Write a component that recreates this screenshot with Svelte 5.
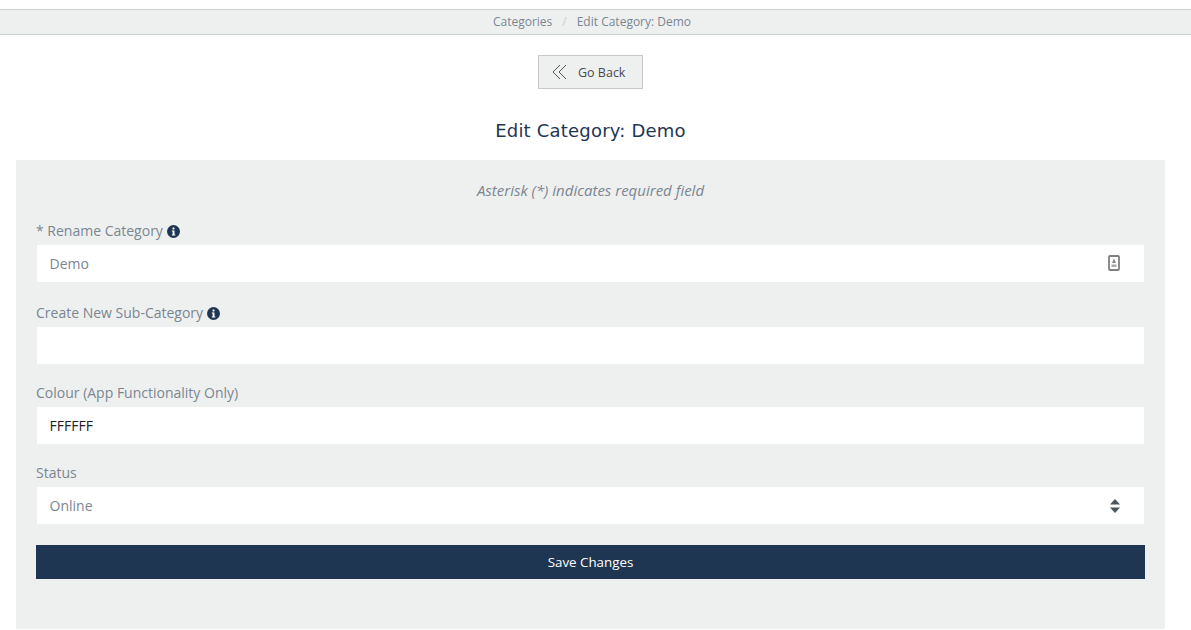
<script>
	let category = 'Demo';
	let colour = 'FFFFFF';
	let status = 'Online';
</script>

<div class="page">
	<nav class="crumbs">
		<span>Categories</span>
		<span class="sep">/</span>
		<span>Edit Category: Demo</span>
	</nav>

	<div class="content">
		<div class="back-row">
			<button class="back">
				<svg width="16" height="16" viewBox="0 0 16 16" fill="none" stroke="#555" stroke-width="1">
					<path d="M8 1 L1 8 L8 15" />
					<path d="M14 1 L7 8 L14 15" />
				</svg>
				Go Back
			</button>
		</div>

		<h1>Edit Category: Demo</h1>

		<form class="panel" on:submit|preventDefault>
			<p class="note">Asterisk (*) indicates required field</p>

			<label class="first" for="name">
				* Rename Category
				<svg class="info" width="13" height="13" viewBox="0 0 13 13">
					<circle cx="6.5" cy="6.5" r="6.5" fill="#1f3653" />
					<rect x="5.5" y="2.4" width="2" height="2" rx="0.6" fill="#fff" />
					<path d="M4.8 5.4 H7.5 V9.4 H8.3 V10.6 H4.8 V9.4 H5.6 V6.6 H4.8 Z" fill="#fff" />
				</svg>
			</label>
			<div class="field">
				<input id="name" bind:value={category} />
				<svg class="contact" width="12" height="16" viewBox="0 0 12 16" fill="none">
					<rect x="1" y="1" width="10" height="14" rx="1" stroke="#808080" stroke-width="1.8" />
					<path d="M6 3.5 L8 8 H4 Z" fill="#888" />
					<rect x="3.5" y="9.5" width="5" height="2.5" fill="#aaa" />
				</svg>
			</div>

			<label for="sub">
				Create New Sub-Category
				<svg class="info" width="13" height="13" viewBox="0 0 13 13">
					<circle cx="6.5" cy="6.5" r="6.5" fill="#1f3653" />
					<rect x="5.5" y="2.4" width="2" height="2" rx="0.6" fill="#fff" />
					<path d="M4.8 5.4 H7.5 V9.4 H8.3 V10.6 H4.8 V9.4 H5.6 V6.6 H4.8 Z" fill="#fff" />
				</svg>
			</label>
			<div class="field"><input id="sub" /></div>

			<label class="tight" for="colour">Colour (App Functionality Only)</label>
			<div class="field"><input id="colour" class="dark" bind:value={colour} /></div>

			<label class="tight" for="status">Status</label>
			<div class="field">
				<select id="status" bind:value={status}>
					<option>Online</option>
					<option>Offline</option>
				</select>
				<svg class="updown" width="10" height="14" viewBox="0 0 10 14" fill="#4a5562">
					<path d="M5 0 L10 5.5 H0 Z" />
					<path d="M0 8.5 H10 L5 14 Z" />
				</svg>
			</div>

			<button class="save" type="submit">Save Changes</button>
		</form>
	</div>
</div>

<style>
	:global(body) {
		margin: 0;
		background: #fff;
	}

	.page {
		padding-top: 9px;
		font-family: "Open Sans", "Liberation Sans", sans-serif;
		color: #7b8691;
	}

	.crumbs {
		display: flex;
		justify-content: center;
		align-items: center;
		gap: 10px;
		height: 24px;
		padding-right: 7px;
		background: #eef0f0;
		border-top: 1px solid #c9ced3;
		border-bottom: 1px solid #c9ced3;
		font-size: 12px;
		line-height: 22px;
	}

	.sep {
		color: #c9ced3;
	}

	.content {
		width: 1149px;
		margin-left: 16px;
	}

	.back-row {
		display: flex;
		justify-content: center;
		padding-top: 20px;
	}

	.back {
		display: flex;
		align-items: center;
		gap: 10px;
		box-sizing: border-box;
		width: 105px;
		height: 34px;
		padding: 0 0 0 13px;
		background: #eef0f0;
		border: 1px solid #c8c8c8;
		font-family: inherit;
		font-size: 12.5px;
		color: #4a4a4a;
	}

	h1 {
		margin: 0;
		padding-top: 30px;
		height: 24px;
		line-height: 24px;
		padding-bottom: 17px;
		text-align: center;
		font-family: "DejaVu Sans", sans-serif;
		font-size: 18px;
		font-weight: 400;
		letter-spacing: 0.2px;
		color: #1f3653;
	}

	.panel {
		box-sizing: border-box;
		display: flex;
		flex-direction: column;
		height: 469px;
		padding: 20px 21px 0 21px;
		background: #eef0f0;
	}

	.note {
		margin: 0;
		height: 20px;
		line-height: 20px;
		text-align: center;
		font-size: 15px;
		font-style: italic;
		color: #7b8691;
	}

	label {
		display: flex;
		align-items: center;
		gap: 4px;
		height: 20px;
		margin-top: 21px;
		margin-bottom: 4px;
		margin-left: -1px;
		font-size: 14px;
		line-height: 20px;
		color: #7b8691;
	}

	label.tight {
		margin-top: 19px;
	}

	.field {
		position: relative;
		width: 1107px;
		height: 37px;
	}

	input,
	select {
		box-sizing: border-box;
		display: block;
		width: 100%;
		height: 37px;
		padding: 0 13px 1px 12.5px;
		background: #fff;
		border: 0;
		border-radius: 0;
		outline: 0;
		appearance: none;
		font-family: inherit;
		font-size: 14px;
		color: #7b8691;
	}

	input.dark {
		color: #222;
	}

	.contact {
		position: absolute;
		top: 10px;
		right: 24px;
	}

	.updown {
		position: absolute;
		top: 12px;
		right: 24px;
	}

	.save {
		width: 1109px;
		height: 34px;
		margin: 21px 0 0 -1px;
		padding: 0 0 1px;
		background: #1f3653;
		border: 0;
		font-family: inherit;
		font-size: 13.33px;
		color: #fff;
	}
</style>
